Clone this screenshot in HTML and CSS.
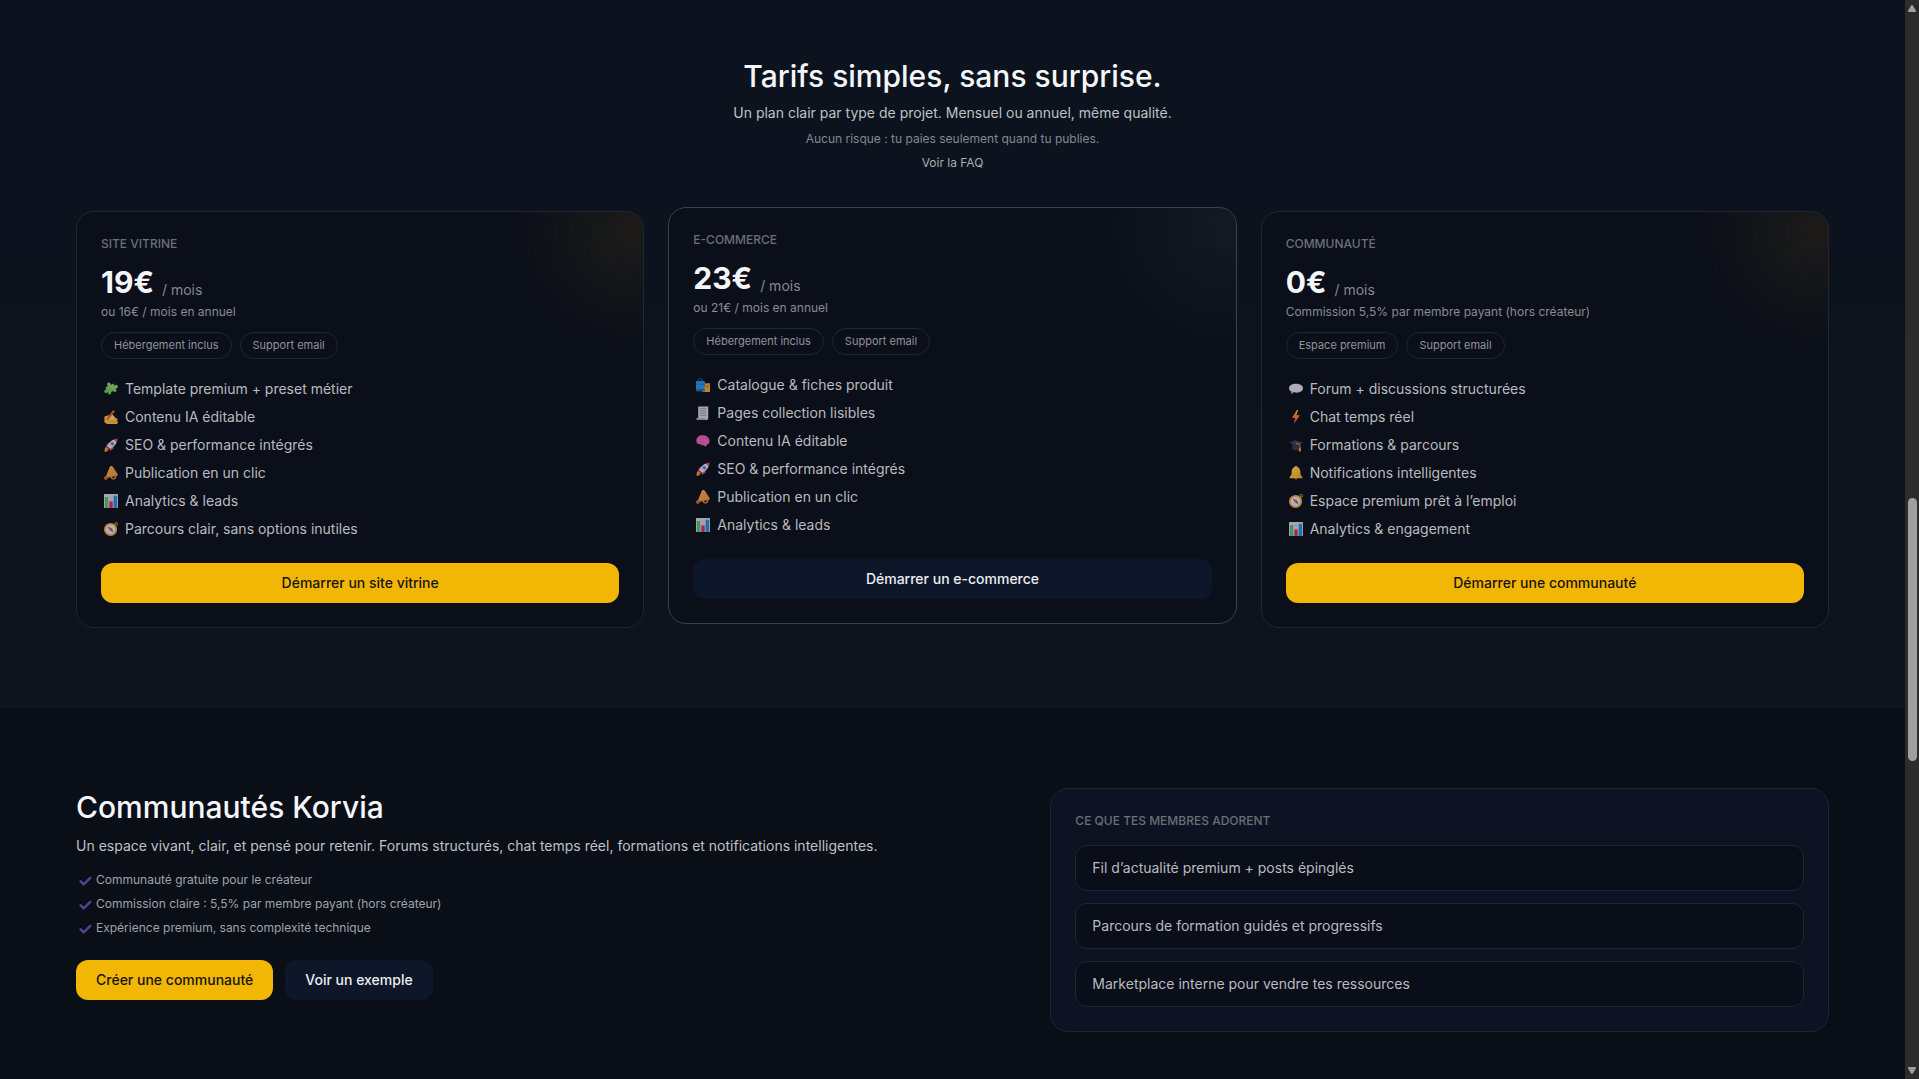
FILE: index.html
```html
<!DOCTYPE html>
<html lang="fr">
<head>
    <meta charset="UTF-8">
    <meta name="viewport" content="width=device-width, initial-scale=1.0">
    <title>Korvia - Tarifs</title>
    <link rel="stylesheet" href="styles.css">
</head>
<body>
    <svg class="sprite" aria-hidden="true">
        <linearGradient id="g-flame" x1="0" y1="0" x2="0" y2="1"><stop offset="0" stop-color="#ffb02e"/><stop offset="1" stop-color="#f03a2e"/></linearGradient>
        <linearGradient id="g-gold" x1="0" y1="0" x2="1" y2="1"><stop offset="0" stop-color="#ffd84a"/><stop offset="1" stop-color="#e89b2b"/></linearGradient>
        <linearGradient id="g-horn" x1="0" y1="0" x2="1" y2="1"><stop offset="0" stop-color="#f7b04a"/><stop offset="1" stop-color="#d98238"/></linearGradient>
        <linearGradient id="g-puzzle" x1="1" y1="0" x2="0" y2="1"><stop offset="0" stop-color="#b5dc6a"/><stop offset="1" stop-color="#4fae62"/></linearGradient>
        <symbol id="i-puzzle" viewBox="0 0 32 32">
            <path fill="url(#g-puzzle)" transform="rotate(-25 16 16)" d="M6 7h7a4 4 0 1 1 6 0h7v6a4 4 0 1 1 0 6v7h-6a4 4 0 1 0-8 0H6v-7a4 4 0 1 1 0-6z"/>
        </symbol>
        <symbol id="i-write" viewBox="0 0 32 32">
            <path fill="#f6b73c" d="M1 15l10-3 5 2 13 5c3 1 3 4 0 4l3 3-2 6H7l-6-4z"/>
            <path fill="#ffd15c" d="M10 14l10-3 5 6-4 5-9-1z"/>
            <path fill="#e8553f" d="M21 0l4 3-14 18-5 3 1-6z"/>
            <path fill="#d9902b" d="M14 25h16v2H12z"/>
        </symbol>
        <symbol id="i-rocket" viewBox="0 0 32 32">
            <path fill="#d8315b" d="M8 12l9-2-9 11-6 3zM21 16l1 8-9 7v-8z"/>
            <path fill="#f08b32" d="M2 23l6-2 3 4-4 6-6 1z"/>
            <path fill="#d9d3e6" d="M30 2c0 9-4 16-16 23l-7-7C13 7 20 2 30 2z"/>
            <path fill="#e0394f" d="M31 1c0 3-1 6-2 8l-7-6c3-1 6-2 9-2z"/>
            <circle cx="19" cy="13" r="4" fill="#3b86d1"/>
        </symbol>
        <symbol id="i-horn" viewBox="0 0 32 32">
            <path fill="none" stroke="#d98e38" stroke-width="3" d="M16 24c1 8 11 7 11-2"/>
            <path fill="url(#g-horn)" d="M13 2c2-3 6-2 8 1l10 15c2 3 0 5-3 5L9 27l-3 4c-3 1-6-2-6-5l5-4z"/>
            <path fill="#b9652a" d="M5 22l4 5-3 4c-3 1-6-2-6-5z"/>
        </symbol>
        <symbol id="i-chart" viewBox="0 0 32 32">
            <rect width="32" height="32" rx="2" fill="#d5d0df"/>
            <path stroke="#aaa3b9" stroke-width="1" d="M0 8h32M0 16h32M0 24h32M8 0v32M16 0v32M24 0v32"/>
            <rect x="2" y="7" width="8" height="25" fill="#55b96a"/>
            <rect x="12" y="17" width="8" height="15" fill="#cf2d72"/>
            <rect x="22" y="4" width="8" height="28" fill="#2489d0"/>
        </symbol>
        <symbol id="i-compass" viewBox="0 0 32 32">
            <circle cx="28" cy="4" r="3" fill="none" stroke="#e8a33a" stroke-width="2"/>
            <circle cx="15" cy="17" r="15" fill="#e8a33a"/>
            <circle cx="15" cy="17" r="11" fill="#ddd8e8"/>
            <path fill="#c94a63" d="M8 10l10 4-5 5z"/>
            <path fill="#6a6180" d="M22 24l-9-5 5-5z"/>
        </symbol>
        <symbol id="i-bags" viewBox="0 0 32 32">
            <path fill="none" stroke="#2b7fc4" stroke-width="2" d="M5 9c0-11 10-11 10 0"/>
            <rect x="15" y="12" width="17" height="20" fill="#e9a12d"/>
            <path fill="none" stroke="#8b5a1f" stroke-width="2" d="M22 16c0 6 7 6 7 0"/>
            <path fill="#2d8fe0" d="M0 7h20v23H0z"/>
            <path fill="#1e6bb0" d="M0 13h20v2H0zM0 25h20v5H0z"/>
        </symbol>
        <symbol id="i-page" viewBox="0 0 32 32">
            <path fill="#cfcadb" d="M5 1h23v26c0 3-1 5-4 5H4c-2 0-3-2-3-4h4z"/>
            <path stroke="#8d869d" stroke-width="2" d="M9 6h14M9 11h14M9 16h14M9 21h14"/>
            <path fill="#a59cb8" d="M1 28h20c0 3 1 4 3 4H4c-2 0-3-2-3-4z"/>
        </symbol>
        <symbol id="i-brain" viewBox="0 0 32 32">
            <path fill="#e660b4" d="M1 17C0 9 6 3 14 3c9-1 17 5 17 13 0 5-3 8-6 8l-3 5-5-4c-3 2-6 1-7-2-5 1-9-2-9-6z"/>
            <path fill="none" stroke="#b83c92" stroke-width="1" d="M7 12c3-2 6 0 6 3M14 5c4 1 4 4 3 6M20 11c4-2 7 0 8 3M11 22c2-4 6-4 10-3"/>
        </symbol>
        <symbol id="i-bubble" viewBox="0 0 32 32">
            <path fill="#d8d2e6" d="M16 4c9 0 16 4 16 10s-7 10-15 10l-6-1-5 4c-1 0-1-2 0-5-4-2-6-5-6-8C0 8 7 4 16 4z"/>
            <path fill="#aaa2bf" d="M1 17c3 5 9 6 16 6s13-3 15-7c-1 5-7 8-15 8l-6-1-5 4c-1 0-1-2 0-5-3-1-5-3-5-5z"/>
        </symbol>
        <symbol id="i-bolt" viewBox="0 0 32 32">
            <path fill="url(#g-flame)" d="M18 0L7 18h7l-3 14 14-20h-8l4-12z"/>
        </symbol>
        <symbol id="i-cap" viewBox="0 0 32 32">
            <path fill="#3a3050" d="M7 14l18 4v8c-5 4-13 3-18-1z"/>
            <path fill="#463a5e" d="M0 11L14 5l18 5-14 8z"/>
            <path fill="none" stroke="#e19a3a" stroke-width="2" d="M16 12l9 3v14"/>
            <path fill="#e19a3a" d="M23 22h4v9h-5z"/>
        </symbol>
        <symbol id="i-bell" viewBox="0 0 32 32">
            <circle cx="16" cy="27" r="4" fill="#b96f24"/>
            <path fill="url(#g-gold)" d="M13 2c1-3 5-3 6 0 5 2 7 6 7 11v6l5 7v2H1v-2l5-7v-6c0-5 2-9 7-11z"/>
        </symbol>
        <symbol id="i-check" viewBox="0 0 32 32">
            <path fill="none" stroke="#7354c4" stroke-width="6" stroke-linecap="round" stroke-linejoin="round" d="M6 19l7 7L28 11"/>
        </symbol>
    </svg>

    <div class="page" id="page">
        <section class="pricing" id="tarifs">
            <header class="pricing-head">
                <h2>Tarifs simples, sans surprise.</h2>
                <p class="lead">Un plan clair par type de projet. Mensuel ou annuel, même qualité.</p>
                <p class="note">Aucun risque : tu paies seulement quand tu publies.</p>
                <a class="faq-link" href="#faq">Voir la FAQ</a>
            </header>

            <div class="plans">
                <article class="plan">
                    <h3 class="label">Site vitrine</h3>
                    <div class="price"><strong>19€</strong> <span>/ mois</span></div>
                    <p class="yearly">ou 16€ / mois en annuel</p>
                    <div class="pills"><span>Hébergement inclus</span><span>Support email</span></div>
                    <ul class="features">
                        <li><svg><use href="#i-puzzle"/></svg>Template premium + preset métier</li>
                        <li><svg><use href="#i-write"/></svg>Contenu IA éditable</li>
                        <li><svg><use href="#i-rocket"/></svg>SEO &amp; performance intégrés</li>
                        <li><svg><use href="#i-horn"/></svg>Publication en un clic</li>
                        <li><svg><use href="#i-chart"/></svg>Analytics &amp; leads</li>
                        <li><svg><use href="#i-compass"/></svg>Parcours clair, sans options inutiles</li>
                    </ul>
                    <button class="btn btn-primary">Démarrer un site vitrine</button>
                </article>

                <article class="plan featured">
                    <h3 class="label">E-commerce</h3>
                    <div class="price"><strong>23€</strong> <span>/ mois</span></div>
                    <p class="yearly">ou 21€ / mois en annuel</p>
                    <div class="pills"><span>Hébergement inclus</span><span>Support email</span></div>
                    <ul class="features">
                        <li><svg><use href="#i-bags"/></svg>Catalogue &amp; fiches produit</li>
                        <li><svg><use href="#i-page"/></svg>Pages collection lisibles</li>
                        <li><svg><use href="#i-brain"/></svg>Contenu IA éditable</li>
                        <li><svg><use href="#i-rocket"/></svg>SEO &amp; performance intégrés</li>
                        <li><svg><use href="#i-horn"/></svg>Publication en un clic</li>
                        <li><svg><use href="#i-chart"/></svg>Analytics &amp; leads</li>
                    </ul>
                    <button class="btn btn-secondary">Démarrer un e-commerce</button>
                </article>

                <article class="plan">
                    <h3 class="label">Communauté</h3>
                    <div class="price"><strong>0€</strong> <span>/ mois</span></div>
                    <p class="yearly">Commission 5,5% par membre payant (hors créateur)</p>
                    <div class="pills"><span>Espace premium</span><span>Support email</span></div>
                    <ul class="features">
                        <li><svg><use href="#i-bubble"/></svg>Forum + discussions structurées</li>
                        <li><svg><use href="#i-bolt"/></svg>Chat temps réel</li>
                        <li><svg><use href="#i-cap"/></svg>Formations &amp; parcours</li>
                        <li><svg><use href="#i-bell"/></svg>Notifications intelligentes</li>
                        <li><svg><use href="#i-compass"/></svg>Espace premium prêt à l’emploi</li>
                        <li><svg><use href="#i-chart"/></svg>Analytics &amp; engagement</li>
                    </ul>
                    <button class="btn btn-primary">Démarrer une communauté</button>
                </article>
            </div>
        </section>

        <section class="community">
            <div class="community-text">
                <h2>Communautés Korvia</h2>
                <p class="lead">Un espace vivant, clair, et pensé pour retenir. Forums structurés, chat temps réel, formations et notifications intelligentes.</p>
                <ul class="checks">
                    <li><svg><use href="#i-check"/></svg>Communauté gratuite pour le créateur</li>
                    <li><svg><use href="#i-check"/></svg>Commission claire : 5,5% par membre payant (hors créateur)</li>
                    <li><svg><use href="#i-check"/></svg>Expérience premium, sans complexité technique</li>
                </ul>
                <div class="actions">
                    <button class="btn btn-primary">Créer une communauté</button>
                    <button class="btn btn-secondary">Voir un exemple</button>
                </div>
            </div>
            <aside class="panel">
                <h3 class="label">Ce que tes membres adorent</h3>
                <ul class="panel-list">
                    <li>Fil d’actualité premium + posts épinglés</li>
                    <li>Parcours de formation guidés et progressifs</li>
                    <li>Marketplace interne pour vendre tes ressources</li>
                </ul>
            </aside>
        </section>
    </div>

    <div class="scrollbar" aria-hidden="true">
        <svg viewBox="0 0 14 14"><path d="M7 6l3 5H4z" stroke-width="2" stroke-linejoin="round"/></svg>
        <div class="track"><div class="thumb"></div></div>
        <svg viewBox="0 0 14 14"><path d="M7 8l3-5H4z" stroke-width="2" stroke-linejoin="round"/></svg>
    </div>
</body>
</html>
```
FILE: styles.css
```css
* {
    box-sizing: border-box;
}
body {
    margin: 0;
    height: 100vh;
    display: flex;
    overflow: hidden;
    background: #0a0e17;
    color: #f5f6fa;
    font-family: Inter, "Liberation Sans", sans-serif;
    font-size: 14px;
    line-height: 20px;
}
h2, h3, p, ul {
    margin: 0;
    padding: 0;
    font-weight: 400;
}
ul {
    list-style: none;
}
.sprite {
    position: absolute;
    width: 0;
    height: 0;
}
.page {
    flex: 1;
    min-width: 0;
}
h2 {
    font-size: 30px;
    line-height: 38px;
    font-weight: 500;
}

/* pricing */
.pricing {
    padding: 57px 76px 80px;
    background: linear-gradient(180deg, #0c131e, #0f131d);
}
.pricing-head {
    display: flex;
    flex-direction: column;
    align-items: center;
    gap: 8px;
    margin-bottom: 40px;
    text-align: center;
}
.lead {
    color: #bfc1c5;
}
.note {
    font-size: 12px;
    line-height: 16px;
    color: #84878e;
}
.faq-link {
    font-size: 12px;
    line-height: 16px;
    color: #a9acb1;
    text-decoration: none;
}
.plans {
    display: grid;
    grid-template-columns: repeat(3, 1fr);
    gap: 24px;
}
.plan {
    display: flex;
    flex-direction: column;
    padding: 24px;
    border: 1px solid #22262f;
    border-radius: 18px;
    background: radial-gradient(circle 115px at calc(100% - 12px) 20px, #1c1b19, rgba(20, 20, 24, 0)), #0b0f19;
}
.plan.featured {
    border-color: #3c404a;
    background: radial-gradient(circle 125px at calc(100% - 12px) 20px, #131a22, rgba(16, 22, 30, 0)), #0b0f19;
    transform: translateY(-4px);
}
.label {
    font-size: 12px;
    line-height: 16px;
    font-weight: 500;
    text-transform: uppercase;
    color: #6b6f77;
}
.price {
    display: flex;
    align-items: flex-end;
    gap: 8px;
    margin-top: 10px;
}
.price strong {
    font-size: 30px;
    line-height: 40px;
    font-weight: 700;
}
.price span {
    line-height: 24px;
    color: #85888f;
}
.yearly {
    margin-top: 2px;
    font-size: 12px;
    line-height: 16px;
    color: #898c92;
}
.pills {
    display: flex;
    gap: 8px;
    margin-top: 12px;
}
.pills span {
    padding: 5px 12px;
    border: 1px solid #22262f;
    border-radius: 999px;
    font-size: 11px;
    line-height: 15px;
    color: #909399;
}
.features {
    display: grid;
    gap: 8px;
    margin: 20px 0 24px;
    color: #b9bbbf;
}
.features li, .checks li {
    display: flex;
    align-items: center;
}
.features svg {
    width: 14px;
    height: 14px;
    margin: 0 7px 0 3px;
    opacity: 0.8;
}
.btn {
    height: 40px;
    padding: 0 20px;
    border: none;
    border-radius: 12px;
    font: inherit;
    font-weight: 500;
    cursor: pointer;
}
.btn-primary {
    background: #f2b705;
    color: #17150c;
}
.btn-secondary {
    background: #0e172a;
    color: #eceef2;
}

/* community */
.community {
    display: grid;
    grid-template-columns: 1.2fr 1fr;
    align-items: start;
    gap: 40px;
    padding: 80px 76px;
}
.community .lead {
    margin-top: 10px;
}
.checks {
    display: grid;
    gap: 8px;
    margin: 16px 0 24px;
    font-size: 12px;
    line-height: 16px;
    color: #a0a3a8;
}
.checks svg {
    width: 14px;
    height: 14px;
    margin: 0 4px 0 2px;
    opacity: 0.7;
}
.actions {
    display: flex;
    gap: 12px;
}
.panel {
    padding: 24px;
    border: 1px solid #1f2531;
    border-radius: 18px;
    background: #0d1322;
}
.panel-list {
    display: grid;
    gap: 12px;
    margin-top: 16px;
}
.panel-list li {
    padding: 12px 16px;
    border: 1px solid #1f2531;
    border-radius: 12px;
    background: #090e18;
    color: #b9bbbf;
}

/* scrollbar */
.scrollbar {
    display: flex;
    flex-direction: column;
    width: 14px;
    background: #2c2c2c;
}
.scrollbar svg {
    width: 14px;
    height: 14px;
    fill: #9f9f9f;
    stroke: #9f9f9f;
}
.track {
    flex: 1;
    padding: 0 2px 0 3px;
}
.thumb {
    height: 25%;
    margin-top: 484px;
    border-radius: 5px;
    background: #9f9f9f;
}
```
